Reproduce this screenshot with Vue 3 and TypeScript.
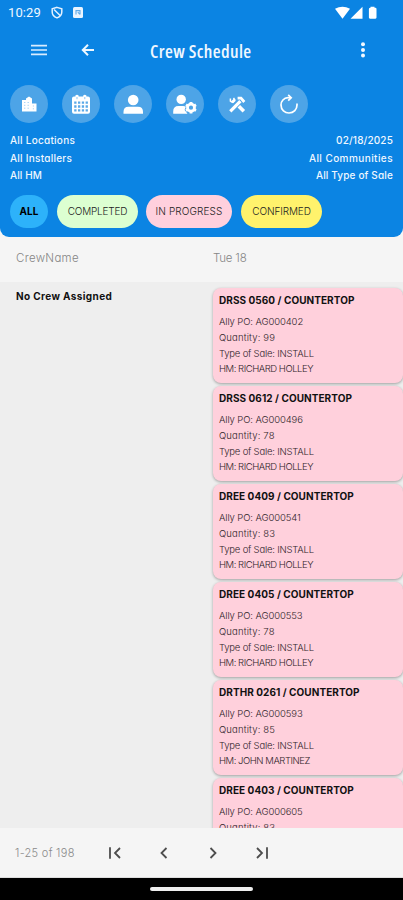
<script setup lang="ts">
interface Job {
  title: string
  po: string
  quantity: number
  type: string
  manager: string
}

const jobs: Job[] = [
  { title: 'DRSS 0560 / COUNTERTOP', po: 'AG000402', quantity: 99, type: 'INSTALL', manager: 'RICHARD HOLLEY' },
  { title: 'DRSS 0612 / COUNTERTOP', po: 'AG000496', quantity: 78, type: 'INSTALL', manager: 'RICHARD HOLLEY' },
  { title: 'DREE 0409 / COUNTERTOP', po: 'AG000541', quantity: 83, type: 'INSTALL', manager: 'RICHARD HOLLEY' },
  { title: 'DREE 0405 / COUNTERTOP', po: 'AG000553', quantity: 78, type: 'INSTALL', manager: 'RICHARD HOLLEY' },
  { title: 'DRTHR 0261 / COUNTERTOP', po: 'AG000593', quantity: 85, type: 'INSTALL', manager: 'JOHN MARTINEZ' },
  { title: 'DREE 0403 / COUNTERTOP', po: 'AG000605', quantity: 83, type: 'INSTALL', manager: 'RICHARD HOLLEY' },
]
</script>

<template>
  <div class="screen">
    <header class="header">
      <div class="status">
        <span class="clock">10:29</span>
        <svg class="shield" viewBox="0 0 12 12" fill="none" stroke="#e4f1ff" stroke-width="1.5">
          <path d="M6 .9 10.8 2.3V5.6C10.8 8.4 9 10.4 6 11.4 3 10.4 1.2 8.4 1.2 5.6V2.3Z" />
          <path d="M3 3 9.4 9.2" />
        </svg>
        <svg class="nfc" viewBox="0 0 10 11">
          <rect width="10" height="11" rx="1.5" fill="#e9f4ff" />
          <path d="M3 7.6V3.6H7V7.6M4.8 5 6.8 7.4" fill="none" stroke="#5fa9e8" stroke-width="1.1" />
        </svg>
        <svg class="signals" viewBox="0 0 43 14" fill="#fff">
          <path d="M0 2.7Q7.5-1.3 15 2.7L7.5 12.7Z" />
          <path d="M27.5 .7V12.7H15.5Z" />
          <path d="M35.5 .7H39.5V1.7H40.3Q41.5 1.7 41.5 3V11.6Q41.5 12.7 40.4 12.7H35Q33.9 12.7 33.9 11.6V3Q33.9 1.7 35.5 1.7Z" />
        </svg>
      </div>

      <div class="toolbar">
        <svg class="menu" viewBox="0 0 18 12" stroke="#d9ecff" stroke-width="1.7">
          <path d="M1 1.6H17M1 6H17M1 10.4H17" />
        </svg>
        <svg class="back" viewBox="0 0 14 14" fill="none" stroke="#eef7ff" stroke-width="2">
          <path d="M13 7H2M7 1.8 1.8 7 7 12.2" />
        </svg>
        <h1>Crew Schedule</h1>
        <svg class="more" viewBox="0 0 6 16" fill="#f2f8ff">
          <circle cx="3" cy="2.3" r="2" />
          <circle cx="3" cy="7.9" r="2" />
          <circle cx="3" cy="13.5" r="2" />
        </svg>
      </div>

      <div class="actions">
        <button>
          <svg viewBox="0 0 38 38">
            <path d="M12 15H16V13.5L19 11.5 22 13.5V18.5H26.5V26.5H12Z" fill="#fff" />
            <path d="M14 17.5H15.4M14 20.3H15.4M14 23.2H15.4M17.5 17.5H18.9M17.5 20.3H18.9M17.5 23.2H18.9M22.8 21H24M22.8 23.8H24" stroke="#a9d3f5" stroke-width="1" />
          </svg>
        </button>
        <button>
          <svg viewBox="0 0 38 38">
            <path d="M12 11.5H13.4V10.6Q15 8.8 16.6 10.6V11.5H21.2V10.6Q22.8 8.8 24.4 10.6V11.5H26Q28 11.5 28 13.5V26.8Q28 28.8 26 28.8H12Q10 28.8 10 26.8V13.5Q10 11.5 12 11.5Z" fill="#fff" />
            <path d="M12.2 17.7H26M12.2 21.5H26M12.2 25.3H26" stroke="#5aa9e8" stroke-width="2.3" stroke-dasharray="2.3 1.5" />
            <path d="M15 12V14.2M22.8 12V14.2" stroke="#8fc5f1" />
          </svg>
        </button>
        <button>
          <svg viewBox="0 0 38 38" fill="#fff">
            <circle cx="19.2" cy="15" r="5.3" />
            <path d="M9.5 28.8V27Q9.5 21.8 14.5 21.8H24Q29 21.8 29 27V28.8Z" />
          </svg>
        </button>
        <button>
          <svg viewBox="0 0 38 38" fill="#fff">
            <circle cx="15.2" cy="14.4" r="4.7" />
            <path d="M7.2 28.7V26.5Q7.2 21 12.5 21H17Q19 21 19.8 21.8L18.6 25 21.5 28.7Z" />
            <circle cx="25" cy="22.7" r="3.5" fill="none" stroke="#fff" stroke-width="2.8" />
            <path d="M25 16.9V18.9M25 26.5V28.5M20 19.8 21.7 20.8M28.3 24.6 30 25.6M30 19.8 28.3 20.8M21.7 24.6 20 25.6" stroke="#fff" stroke-width="2.8" />
          </svg>
        </button>
        <button>
          <svg viewBox="0 0 38 38" fill="none" stroke="#fff">
            <path d="M12.3 26.3 22.4 16.2" stroke-width="3.2" />
            <path d="M19.6 13.2H23L26.3 17" stroke-width="2.8" />
            <path d="M16.5 17 14.5 15M20.8 21.3 25.8 26.3" stroke-width="3.6" />
            <path d="M12.4 13.4V16L14.3 17.3 16.8 14.8 15.5 12.9" stroke-width="1.5" />
          </svg>
        </button>
        <button>
          <svg viewBox="0 0 38 38" fill="none" stroke="#fff" stroke-width="1.7">
            <path d="M20 12.7H18C13.8 13 11 16.2 11 20 11 24.8 14.8 28 19 28 23.8 28 27 24.4 27 20V18.4" />
            <path d="M18.2 9.8 21.2 12.7 18.2 15.6" />
          </svg>
        </button>
      </div>

      <div class="filters">
        <div><p>All Locations</p><p>All Installers</p><p class="hm">All HM</p></div>
        <div class="right"><p class="date">02/18/2025</p><p class="communities">All Communities</p><p class="sale">All Type of Sale</p></div>
      </div>

      <div class="chips">
        <button class="chip all">ALL</button>
        <button class="chip completed">COMPLETED</button>
        <button class="chip progress">IN PROGRESS</button>
        <button class="chip confirmed">CONFIRMED</button>
      </div>
    </header>

    <div class="columns">
      <span class="name">CrewName</span>
      <span class="day">Tue 18</span>
    </div>

    <main class="schedule">
      <div class="crew">No Crew Assigned</div>
      <div class="jobs">
        <article v-for="job in jobs" :key="job.po" class="job">
          <h2>{{ job.title }}</h2>
          <p class="po">Ally PO: {{ job.po }}</p>
          <p class="quantity">Quantity: {{ job.quantity }}</p>
          <p class="type">Type of Sale: {{ job.type }}</p>
          <p class="manager">HM: {{ job.manager }}</p>
        </article>
      </div>
    </main>

    <footer class="pager">
      <span>1-25 of 198</span>
      <svg viewBox="0 0 14 14"><path d="M2 1.3V12.7M12 2 7 7 12 12" /></svg>
      <svg viewBox="0 0 14 14"><path d="M9.5 2 4.5 7 9.5 12" /></svg>
      <svg viewBox="0 0 14 14"><path d="M4.5 2 9.5 7 4.5 12" /></svg>
      <svg viewBox="0 0 14 14"><path d="M2 2 7 7 2 12M12 1.3V12.7" /></svg>
    </footer>
    <div class="gesture"><i></i></div>
  </div>
</template>

<style>
body {
  background: #f5f5f5;
}
</style>

<style scoped>
.screen {
  width: 403px;
  height: 900px;
  display: flex;
  flex-direction: column;
  overflow: hidden;
  background: #f5f5f5;
  font-family: Inter, sans-serif;
  font-feature-settings: "cv11";
}
h1, h2, p {
  margin: 0;
}
svg {
  display: block;
  flex: none;
}
button {
  border: 0;
  padding: 0;
  font-family: inherit;
}
.header {
  box-sizing: border-box;
  flex: none;
  height: 237px;
  background: #0b84e3;
  border-radius: 0 0 9px 9px;
  color: #eff7ff;
}
.status {
  display: flex;
  align-items: center;
  height: 25px;
  padding-left: 8px;
}
.clock {
  width: 43px;
  font: 400 13px/24px Roboto, sans-serif;
  letter-spacing: 0.1px;
}
.shield {
  width: 12px;
  height: 13px;
}
.nfc {
  width: 10px;
  height: 11px;
  margin-left: 10px;
}
.signals {
  width: 43px;
  height: 14px;
  margin-left: 252px;
}
.toolbar {
  display: flex;
  align-items: center;
  height: 50px;
  padding-left: 30px;
}
.menu {
  width: 18px;
  height: 12px;
}
.back {
  width: 14px;
  height: 14px;
  margin-left: 33px;
}
h1 {
  width: 103px;
  margin: 2px 0 0 55px;
  font: 600 18px/26px "Open Sans", sans-serif;
  font-stretch: 75%;
  white-space: nowrap;
  letter-spacing: 0.38px;
}
.more {
  width: 6px;
  height: 16px;
  margin-left: 107px;
}
.actions {
  display: flex;
  gap: 14px;
  padding: 10px 10px 0;
}
.actions button {
  width: 38px;
  height: 38px;
  border-radius: 50%;
  background: #4da4e7;
}
.actions svg {
  width: 38px;
  height: 38px;
}
.filters {
  display: flex;
  justify-content: space-between;
  padding: 9px 10px 0;
  font-size: 10px;
  font-weight: 500;
  line-height: 17.5px;
  letter-spacing: 0.25px;
}
.hm {
  letter-spacing: 0.1px;
}
.right {
  text-align: right;
}
.date {
  letter-spacing: 0.15px;
}
.communities {
  letter-spacing: 0.43px;
}
.sale {
  letter-spacing: 0.15px;
}
.chips {
  display: flex;
  padding: 10px 10px 0;
}
.chip {
  height: 33px;
  border-radius: 17px;
  font-size: 10px;
  font-weight: 300;
  color: #222;
}
.all {
  width: 38px;
  background: #2db2fa;
  color: #000;
  font-weight: 700;
}
.completed {
  width: 81px;
  margin-left: 9px;
  background: #dcffd1;
  letter-spacing: -0.2px;
}
.progress {
  width: 86px;
  margin-left: 8px;
  background: #ffd0dd;
  letter-spacing: 0.12px;
}
.confirmed {
  width: 81px;
  margin-left: 9px;
  background: #fff26c;
  letter-spacing: -0.1px;
}
.columns {
  display: flex;
  flex: none;
  height: 45px;
  padding-left: 16px;
  font-size: 11.5px;
  font-weight: 300;
  line-height: 43px;
  color: #858585;
}
.name {
  letter-spacing: 0.3px;
}
.day {
  margin-left: auto;
  width: 190px;
  letter-spacing: -0.2px;
}
.schedule {
  display: flex;
  flex: none;
  height: 546px;
  overflow: hidden;
  background: #eee;
}
.crew {
  box-sizing: border-box;
  width: 213px;
  padding: 6px 0 0 16px;
  font-size: 10px;
  line-height: 16px;
  font-weight: 700;
  letter-spacing: 0.38px;
  color: #111;
}
.jobs {
  display: flex;
  flex-direction: column;
  gap: 3px;
  width: 190px;
  padding-top: 6px;
}
.job {
  box-sizing: border-box;
  flex: none;
  height: 95px;
  padding: 4px 0 0 6px;
  border-radius: 8px;
  background: #ffd0dc;
  box-shadow: 0 1px 3px #0005;
  font-size: 9.5px;
  font-weight: 300;
  line-height: 15.8px;
  color: #2f252a;
  white-space: nowrap;
}
.job h2 {
  margin-bottom: 6px;
  font-size: 10px;
  font-weight: 700;
  line-height: 16px;
  letter-spacing: 0.06px;
  color: #111;
}
.po {
  letter-spacing: -0.1px;
}
.quantity {
  letter-spacing: 0.15px;
}
.type {
  letter-spacing: -0.2px;
}
.manager {
  letter-spacing: -0.46px;
}
.pager {
  display: flex;
  align-items: center;
  box-sizing: border-box;
  flex: none;
  height: 50px;
  padding-left: 15px;
  border-bottom: 1px solid #ddd;
  font-size: 11px;
  font-weight: 300;
  letter-spacing: 0.3px;
  color: #8a8a8a;
}
.pager span {
  width: 93px;
}
.pager svg {
  width: 14px;
  height: 14px;
  margin-right: 35px;
  fill: none;
  stroke: #4d4d4d;
  stroke-width: 1.8;
}
.gesture {
  display: flex;
  justify-content: center;
  flex: 1;
  padding-top: 9px;
  background: #000;
}
.gesture i {
  width: 103px;
  height: 4px;
  border-radius: 2px;
  background: #eee;
}
</style>
